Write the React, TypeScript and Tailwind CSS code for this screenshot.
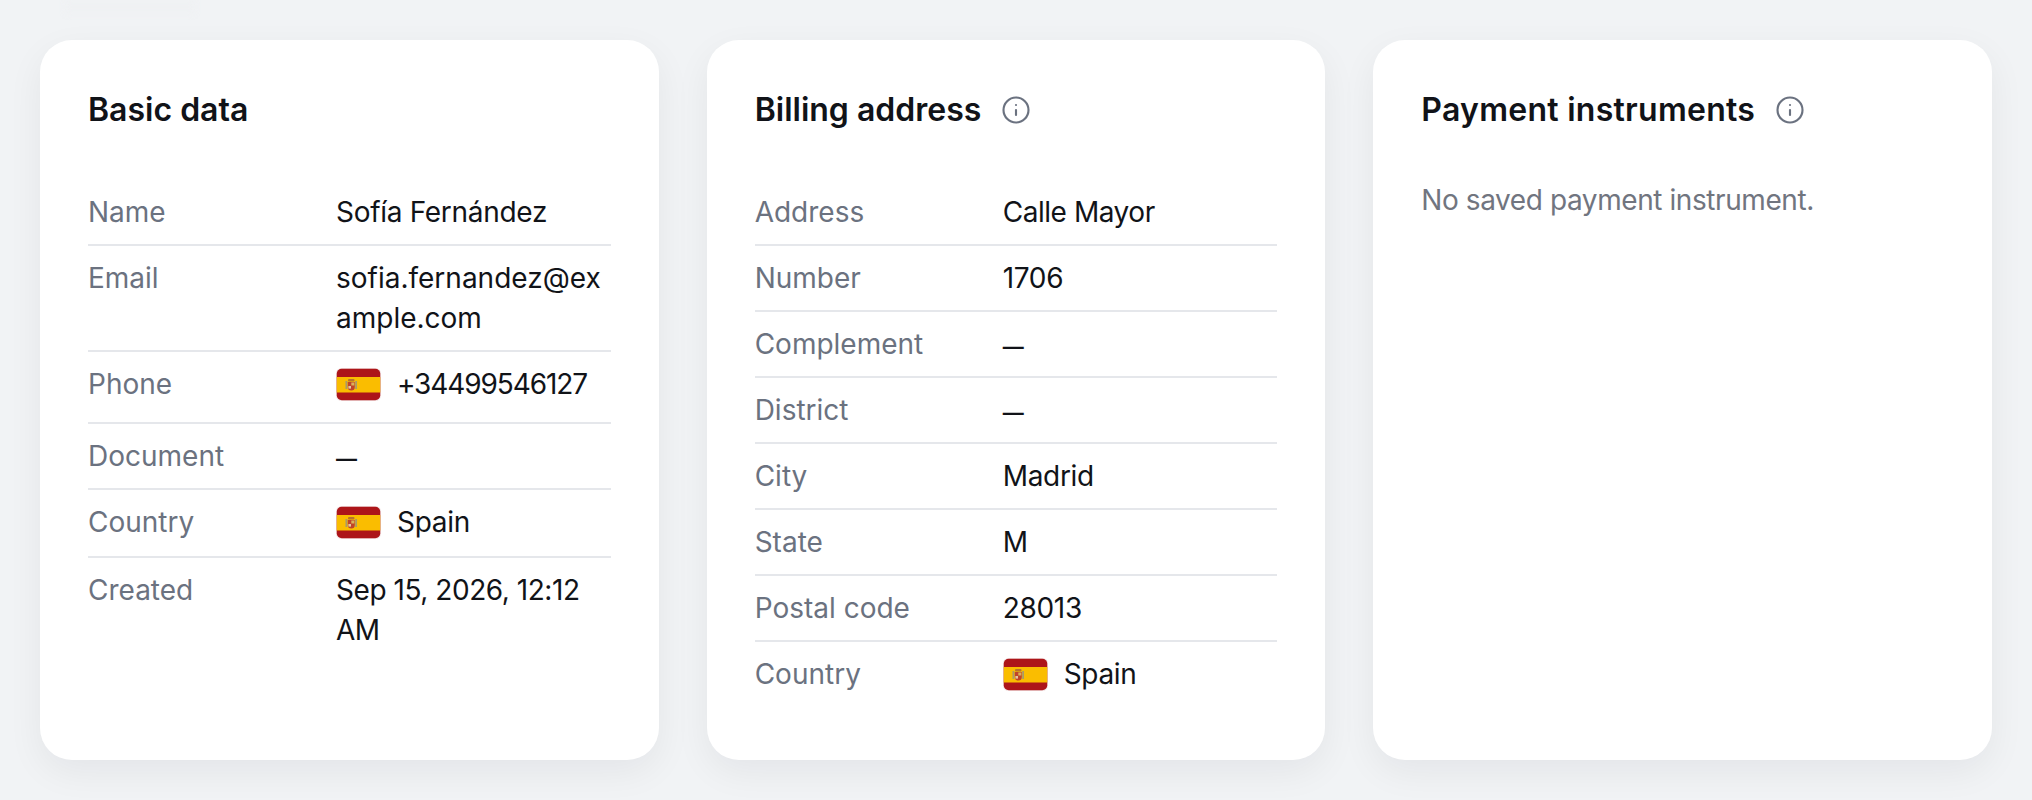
import React from 'react';
import { Info } from 'lucide-react';

const SpainFlag: React.FC = () => (
  <svg width="45" height="33" viewBox="0 0 45 33" className="shrink-0">
    <rect x="0" y="0" width="45" height="33" rx="5.5" fill="#f3e4e4" />
    <rect x="0.75" y="0.75" width="43.5" height="31.5" rx="5" fill="#AD1519" />
    <rect x="0.75" y="9" width="43.5" height="15.5" fill="#FABD00" />
    <rect x="9.5" y="13" width="1.8" height="8" fill="#A89A6A" />
    <rect x="19.2" y="13" width="1.8" height="8" fill="#A89A6A" />
    <rect x="12" y="11" width="6.5" height="2.5" rx="1" fill="#B8742E" />
    <path d="M11.8 14h7v5a3.5 3.5 0 0 1-7 0z" fill="#C0432A" />
    <rect x="15.3" y="14.5" width="3" height="3" fill="#D9B25A" />
    <rect x="12.4" y="18" width="2.6" height="2.6" fill="#E3C9A0" />
  </svg>
);

const Row: React.FC<{ label: string; last?: boolean; className?: string; children: React.ReactNode }> = ({ label, last, className, children }) => (
  <div className={`flex pt-3 ${className ?? 'pb-3'} ${last ? '' : 'border-b-2 border-[#e5e7eb]'}`}>
    <div className="w-[248px] shrink-0 text-[#6b7280]">{label}</div>
    <div className="flex-1 min-w-0 break-all text-[#111318] tracking-[-0.3px]">{children}</div>
  </div>
);

const FlagValue: React.FC<{ text: string; className?: string }> = ({ text, className }) => (
  <div className="flex items-center gap-4">
    <SpainFlag />
    <span className={className}>{text}</span>
  </div>
);

const Dash: React.FC = () => <span className="text-[21px] leading-none font-semibold">—</span>;

const Card: React.FC<{ title: string; info?: boolean; titleClass?: string; children: React.ReactNode }> = ({ title, info, titleClass, children }) => (
  <div className="bg-white rounded-[32px] p-12 shadow-[0_12px_36px_rgba(17,24,39,0.06)]">
    <div className="flex items-center gap-5 h-11 mb-12">
      <h2 className={`text-[32px] font-semibold text-[#111318] leading-10 ${titleClass ?? ''}`}>{title}</h2>
      {info && <Info size={30} strokeWidth={1.7} className="text-[#6b7280]" />}
    </div>
    {children}
  </div>
);

export default function App() {
  return (
    <div className="relative min-h-screen bg-[#f1f3f5] p-10 font-['Inter',sans-serif] text-[28px] leading-10">
      <div className="absolute left-[65px] top-0 h-[14px] w-[130px] bg-[#eff1f3] blur-[3px]" />
      <div className="relative grid grid-cols-3 gap-12 h-[720px]">
        <Card title="Basic data">
          <Row label="Name">Sofía Fernández</Row>
          <Row label="Email"><span className="tracking-normal">sofia.fernandez@example.com</span></Row>
          <Row label="Phone" className="pb-[18px]"><FlagValue text="+34499546127" className="tracking-[-1.1px]" /></Row>
          <Row label="Document"><Dash /></Row>
          <Row label="Country" className="pb-[14px]"><FlagValue text="Spain" /></Row>
          <Row label="Created" last><span className="break-normal tracking-[-0.45px]">Sep 15, 2026, 12:12 AM</span></Row>
        </Card>
        <Card title="Billing address" info>
          <Row label="Address"><span className="tracking-[-0.45px]">Calle Mayor</span></Row>
          <Row label="Number">1706</Row>
          <Row label="Complement"><Dash /></Row>
          <Row label="District"><Dash /></Row>
          <Row label="City">Madrid</Row>
          <Row label="State">M</Row>
          <Row label="Postal code">28013</Row>
          <Row label="Country" last><FlagValue text="Spain" /></Row>
        </Card>
        <Card title="Payment instruments" info titleClass="tracking-[0.27px]">
          <p className="text-[#71757f] tracking-[-0.42px]">No saved payment instrument.</p>
        </Card>
      </div>
    </div>
  );
}
